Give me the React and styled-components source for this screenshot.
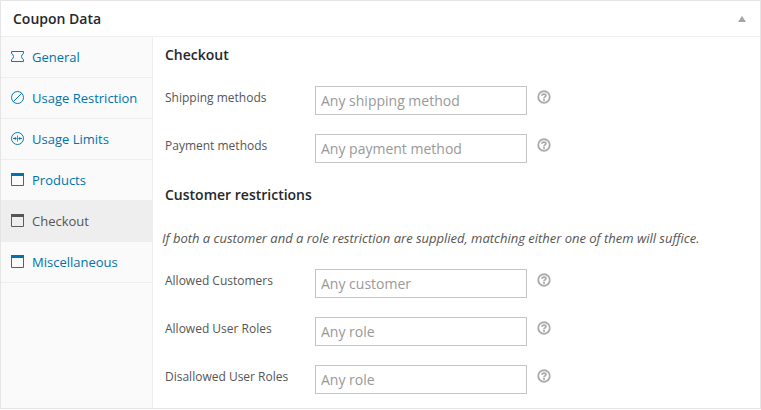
import React from 'react';
import styled, { createGlobalStyle } from 'styled-components';

const Global = createGlobalStyle`
  *, *::before, *::after { box-sizing: border-box; }
  body { margin: 0; background: #fff; font-family: "Open Sans", sans-serif; font-size: 13px; color: #555; }
`;

const Panel = styled.section`
  display: flex;
  flex-direction: column;
  width: 761px;
  height: 409px;
  border: 1px solid #e5e5e5;
  box-shadow: 0 1px 0 #e8e8e8;
  background: #fff;
`;

const Header = styled.header`
  display: flex;
  align-items: center;
  justify-content: space-between;
  height: 36px;
  padding: 0 14px 0 12px;
  border-bottom: 1px solid #eee;
`;

const Title = styled.h2`
  margin: 0;
  font-size: 14px;
  line-height: 20px;
  font-weight: 600;
  color: #23282d;
`;

const Body = styled.div`
  display: flex;
  flex: 1;
  min-height: 0;
`;

const Tabs = styled.nav`
  width: 152px;
  border-right: 1px solid #eee;
  background: #fafafa;
`;

const Tab = styled.a`
  display: flex;
  align-items: center;
  gap: 7px;
  height: 41px;
  padding: 0 0 0 10px;
  border-bottom: 1px solid #eee;
  font-size: 13px;
  line-height: 20px;
  white-space: nowrap;
  color: ${(p) => (p.$active ? '#555' : '#0073aa')};
  background: ${(p) => (p.$active ? '#eee' : 'transparent')};
  svg { flex: none; margin-top: -1px; }
`;

const Content = styled.main`
  flex: 1;
  padding-left: 12px;
`;

const Section = styled.section`
  padding-top: ${(p) => p.$top}px;
`;

const Note = styled.p`
  margin: 23px 0 21px -3px;
  font-size: 13px;
  line-height: 20px;
  letter-spacing: -0.012px;
  font-style: italic;
  color: #555;
`;

const Fields = styled.div`
  display: grid;
  gap: 19px;
  margin-top: ${(p) => p.$top || 0}px;
`;

const Field = styled.div`
  display: grid;
  grid-template-columns: 150px 212px 24px;
  height: 29px;
`;

const Label = styled.label`
  margin-top: 2px;
  font-size: 12px;
  line-height: 20px;
  white-space: nowrap;
  color: #555;
`;

const Input = styled.input`
  width: 212px;
  height: 29px;
  padding: 0 5px;
  border: 1px solid #c4c4c4;
  border-radius: 0;
  outline: 0;
  background: #fff;
  font: 14px/20px "Open Sans", sans-serif;
  color: #444;
  &::placeholder { color: #999; opacity: 1; }
`;

const Help = styled.span`
  margin: 4px 0 0 10px;
  line-height: 0;
`;

const icons = {
  ticket: (
    <path d="M.5 2.5H12.5V4.5Q10.5 5.3 10.5 7.5T12.5 10.5V12.5H.5V10.5Q2.5 9.7 2.5 7.5T.5 4.5Z" />
  ),
  restrict: (
    <>
      <circle cx="6.5" cy="7.5" r="6" />
      <path d="M2.4 11.6L10.6 3.4" />
    </>
  ),
  limits: (
    <>
      <circle cx="6.5" cy="7.5" r="6" />
      <path d="M6.5 4.5V10.5" strokeWidth=".8" />
      <path d="M2 7.5H5.2M11 7.5H7.8" />
      <path d="M3.8 5.7L5.8 7.5L3.8 9.3ZM9.2 5.7L7.2 7.5L9.2 9.3Z" fill="currentColor" stroke="none" />
    </>
  ),
  window: (
    <>
      <path d="M.5 1.5H12.5V13.5H.5Z" />
      <path d="M0 2.5H13" strokeWidth="3" />
    </>
  ),
};

const Icon = ({ name }) => (
  <svg width="14" height="15" viewBox="0 0 14 15" fill="none" stroke="currentColor" strokeWidth=".95">
    {icons[name]}
  </svg>
);

const HelpIcon = () => (
  <svg width="14" height="14" viewBox="0 0 14 14" fill="none" stroke="#aaa">
    <circle cx="7" cy="7" r="5.75" strokeWidth="1.8" />
    <path d="M5 5.7Q5.1 4.1 7 4.1T8.9 5.6Q8.9 6.4 7.9 6.9T7 8.3" strokeWidth="1.7" />
    <path d="M7 9.1V10.8" strokeWidth="1.8" />
  </svg>
);

const tabs = [
  ['General', 'ticket'],
  ['Usage Restriction', 'restrict'],
  ['Usage Limits', 'limits'],
  ['Products', 'window'],
  ['Checkout', 'window', true],
  ['Miscellaneous', 'window'],
];

const FieldRow = ({ label, placeholder }) => (
  <Field>
    <Label>{label}</Label>
    <Input placeholder={placeholder} />
    <Help><HelpIcon /></Help>
  </Field>
);

export default function App() {
  return (
    <>
      <Global />
      <Panel>
        <Header>
          <Title>Coupon Data</Title>
          <svg width="8" height="6" viewBox="0 0 8 6"><path d="M0 6L4 0L8 6Z" fill="#a0a5aa" /></svg>
        </Header>
        <Body>
          <Tabs>
            {tabs.map(([name, icon, active]) => (
              <Tab key={name} $active={active}><Icon name={icon} />{name}</Tab>
            ))}
          </Tabs>
          <Content>
            <Section $top={8}>
              <Title>Checkout</Title>
              <Fields $top={21}>
                <FieldRow label="Shipping methods" placeholder="Any shipping method" />
                <FieldRow label="Payment methods" placeholder="Any payment method" />
              </Fields>
            </Section>
            <Section $top={22}>
              <Title>Customer restrictions</Title>
              <Note>If both a customer and a role restriction are supplied, matching either one of them will suffice.</Note>
              <Fields>
                <FieldRow label="Allowed Customers" placeholder="Any customer" />
                <FieldRow label="Allowed User Roles" placeholder="Any role" />
                <FieldRow label="Disallowed User Roles" placeholder="Any role" />
              </Fields>
            </Section>
          </Content>
        </Body>
      </Panel>
    </>
  );
}
